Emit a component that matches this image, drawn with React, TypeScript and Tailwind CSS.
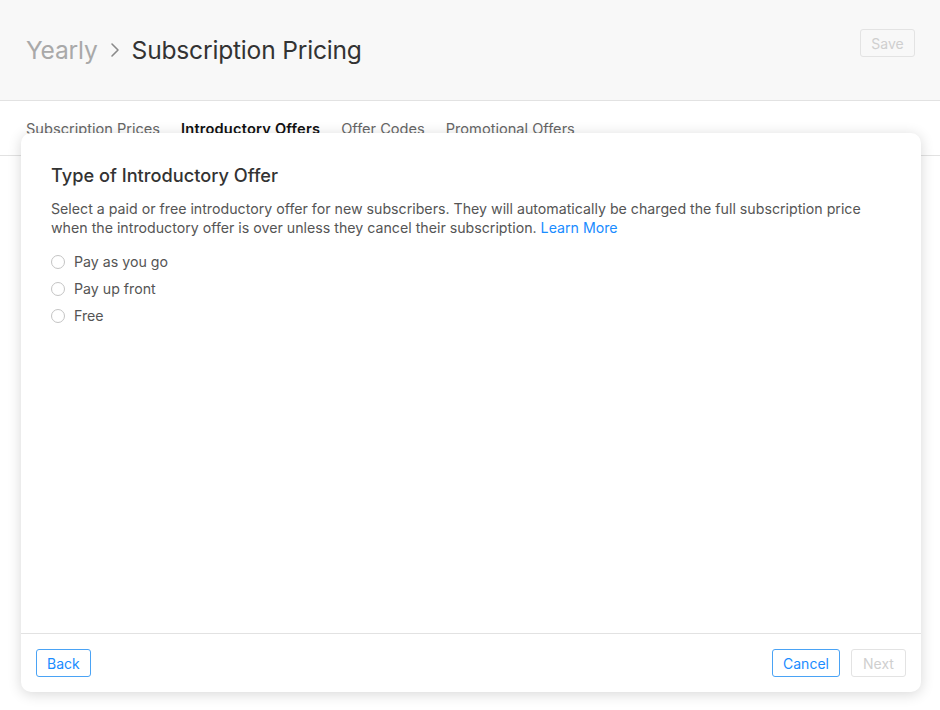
import React from 'react'

const tabs = ['Subscription Prices', 'Introductory Offers', 'Offer Codes', 'Promotional Offers']
const options = ['Pay as you go', 'Pay up front', 'Free']

function Radio({ label }: { label: string }) {
  return (
    <label className="flex items-center gap-[9px] h-[27px] text-[14.2px] text-[#555]">
      <span className="w-[14px] h-[14px] rounded-full border border-[#c4c4c4] bg-white shrink-0" />
      {label}
    </label>
  )
}

export default function App() {
  return (
    <div className="relative w-[940px] h-[710px] bg-white overflow-hidden" style={{ fontFamily: 'Inter, "Noto Sans", sans-serif' }}>
      {/* Header */}
      <div className="h-[101px] bg-[#f8f8f8] border-b border-[#e2e2e2] flex items-start justify-between pl-[26px] pr-[25px]">
        <div className="flex items-center h-[100px] text-[24.6px] tracking-[-0.2px]">
          <span className="text-[#a9a9a9]">Yearly</span>
          <svg className="mx-[12px]" width="10" height="16" viewBox="0 0 10 16" fill="none">
            <path d="M2 2l6 6-6 6" stroke="#8a8a8a" strokeWidth="1.6" strokeLinecap="round" strokeLinejoin="round" />
          </svg>
          <span className="text-[#333]">Subscription Pricing</span>
        </div>
        <button className="mt-[29px] w-[55px] h-[28px] rounded-[3px] border border-[#e3e3e3] text-[14px] text-[#cfcfcf]">
          Save
        </button>
      </div>

      {/* Tabs */}
      <div className="h-[55px] border-b border-[#e2e2e2] flex items-start gap-[21px] pl-[26px] pt-[18px] text-[14.6px]">
        {tabs.map((t, i) => (
          <span key={t} className={i === 1 ? 'font-semibold text-[#111] tracking-[0.2px]' : 'text-[#666]'}>
            {t}
          </span>
        ))}
      </div>

      {/* Modal */}
      <div className="absolute left-[21px] top-[133px] w-[900px] h-[559px] bg-white rounded-[10px] shadow-[0_2px_14px_rgba(0,0,0,0.16)] flex flex-col">
        <div className="flex-1 px-[30px] pt-[30px]">
          <h2 className="text-[18.2px] leading-[24px] font-medium text-[#333]">Type of Introductory Offer</h2>
          <p className="mt-[12px] max-w-[835px] text-[14.2px] leading-[19px] text-[#555]">
            Select a paid or free introductory offer for new subscribers. They will automatically be charged the full subscription price
            when the introductory offer is over unless they cancel their subscription.{' '}
            <a className="text-[#1a8cff]">Learn More</a>
          </p>
          <div className="mt-[11px] flex flex-col">
            {options.map((o) => (
              <Radio key={o} label={o} />
            ))}
          </div>
        </div>
        <div className="h-[59px] border-t border-[#e2e2e2] flex items-center justify-between px-[15px]">
          <button className="h-[28px] px-[10px] rounded-[3px] border border-[#4aa3f5] text-[14px] text-[#1a8cff]">Back</button>
          <div className="flex gap-[11px]">
            <button className="h-[28px] w-[68px] rounded-[3px] border border-[#4aa3f5] text-[14px] text-[#1a8cff]">Cancel</button>
            <button className="h-[28px] w-[55px] rounded-[3px] border border-[#e3e3e3] text-[14px] text-[#cfcfcf]">Next</button>
          </div>
        </div>
      </div>
    </div>
  )
}
